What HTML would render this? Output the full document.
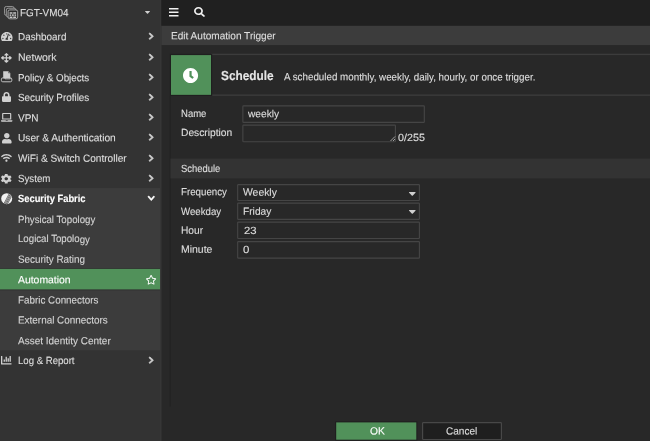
<!DOCTYPE html>
<html lang="en"><head><meta charset="utf-8"><title>Edit Automation Trigger</title>
<style>
html,body{margin:0;padding:0}
body{width:650px;height:441px;overflow:hidden;position:relative;background:#282828;font-family:"Liberation Sans",sans-serif}
.a{position:absolute;display:block}
.t{position:absolute;white-space:nowrap;display:block;transform-origin:0 0;text-rendering:geometricPrecision;-webkit-text-stroke:0.12px}
svg{position:absolute;overflow:visible}
.bx{position:absolute;box-sizing:border-box;border:1px solid #484848;background:#282828}
#txt{position:absolute;left:0;top:0;width:650px;height:441px;will-change:transform}

</style></head><body>
<svg style="left:0;top:0" width="650" height="441" viewBox="0 0 650 441"><rect x="0.00" y="0.00" width="160.20" height="441.00" fill="#333333"/>
<rect x="0.00" y="188.10" width="160.20" height="162.20" fill="#3c3c3c"/>
<rect x="0.00" y="268.00" width="160.20" height="22.30" fill="#303030"/>
<rect x="0.00" y="268.90" width="160.20" height="20.50" fill="#51915a"/>
<rect x="160.20" y="0.00" width="1.20" height="441.00" fill="#3a3a3a"/>
<rect x="161.40" y="0.00" width="488.60" height="25.80" fill="#202020"/>
<rect x="161.40" y="25.80" width="488.60" height="19.30" fill="#3c3c3c"/>
<rect x="211.00" y="53.70" width="439.00" height="1.40" fill="#3c3c3c"/>
<rect x="211.00" y="94.40" width="439.00" height="1.50" fill="#3a3a3a"/>
<rect x="169.80" y="53.80" width="42.40" height="42.20" fill="#1f1f1f"/>
<rect x="171.00" y="55.10" width="40.00" height="39.75" fill="#51915a"/>
<rect x="169.60" y="96.00" width="1.10" height="310.50" fill="#212121"/>
<rect x="170.40" y="158.60" width="479.60" height="19.80" fill="#333333"/>
<rect x="242.88" y="105.88" width="181.45" height="16.45" rx="0.7" fill="none" stroke="#454545" stroke-width="1.15"/>
<rect x="242.88" y="125.08" width="152.55" height="16.65" rx="0.7" fill="none" stroke="#454545" stroke-width="1.15"/>
<rect x="237.67" y="184.57" width="181.75" height="15.95" rx="0.7" fill="none" stroke="#454545" stroke-width="1.15"/>
<rect x="237.67" y="203.07" width="181.75" height="16.35" rx="0.7" fill="none" stroke="#454545" stroke-width="1.15"/>
<rect x="237.67" y="222.17" width="181.75" height="16.35" rx="0.7" fill="none" stroke="#454545" stroke-width="1.15"/>
<rect x="237.67" y="241.57" width="181.75" height="16.55" rx="0.7" fill="none" stroke="#454545" stroke-width="1.15"/>
<rect x="335.20" y="421.40" width="82.10" height="19.30" fill="#1f1f1f"/>
<rect x="336.20" y="422.40" width="80.10" height="17.30" fill="#51915a"/>
<rect x="422.60" y="422.70" width="78.80" height="16.80" rx="0.8" fill="#1f1f1f" stroke="#484848" stroke-width="1.2"/></svg>
<!-- icons -->
<svg style="left:4px;top:5.700px" width="14.2" height="13.3" viewBox="0 0 14.2 13.8" preserveAspectRatio="none">
<rect x="0.5" y="0.5" width="9.6" height="9.2" rx="1.8" fill="#333" stroke="#9c9c9c" stroke-width="0.9"/>
<rect x="2.3" y="2.3" width="9.6" height="9.2" rx="1.8" fill="#333" stroke="#a6a6a6" stroke-width="0.9"/>
<rect x="4.1" y="4.1" width="9.6" height="9.2" rx="1.8" fill="#2a2a2a" stroke="#b4b4b4" stroke-width="0.9"/>
<g fill="#e4e4e4"><rect x="5.6" y="6.6" width="2.9" height="1.3"/><rect x="9.2" y="6.6" width="2.9" height="1.3"/>
<rect x="5.6" y="8.8" width="1.6" height="1.3"/><rect x="7.9" y="8.8" width="1.9" height="1.3"/><rect x="10.5" y="8.8" width="1.6" height="1.3"/>
<rect x="5.6" y="11" width="2.9" height="1.3"/><rect x="9.2" y="11" width="2.9" height="1.3"/></g>
</svg>
<svg style="left:145.00px;top:11.20px" width="5.00" height="2.80" viewBox="11.30 192.00 297.31 168.65" preserveAspectRatio="none"><path fill="#d0d0d0" stroke="#d0d0d0" stroke-width="0" d="M31.3 192h257.300c17.800 0 26.700 21.500 14.100 34.100L174.100 354.800c-7.800 7.800-20.500 7.800-28.300 0L17.200 226.100C4.600 213.500 13.500 192 31.300 192z"/></svg>
<svg style="left:0.90px;top:31.50px" width="11.60" height="9.10" viewBox="0.00 32.00 576.00 448.00" preserveAspectRatio="none"><path fill="#d0d0d0" stroke="#d0d0d0" stroke-width="0" d="M288 32C128.94 32 0 160.94 0 320c0 52.8 14.25 102.26 39.06 144.8 5.61 9.62 16.3 15.2 27.44 15.2h443c11.14 0 21.83-5.58 27.44-15.2C561.75 422.26 576 372.8 576 320c0-159.06-128.94-288-288-288zm0 64c14.71 0 26.58 10.13 30.32 23.65-1.11 2.26-2.64 4.23-3.45 6.67l-9.22 27.67c-5.13 3.49-10.97 6.01-17.64 6.01-17.67 0-32-14.33-32-32S270.33 96 288 96zM96 384c-17.67 0-32-14.33-32-32s14.33-32 32-32 32 14.33 32 32-14.33 32-32 32zm48-160c-17.67 0-32-14.33-32-32s14.33-32 32-32 32 14.33 32 32-14.33 32-32 32zm246.77-72.41l-61.33 184C343.13 347.33 352 364.54 352 384c0 11.72-3.38 22.55-8.88 32H232.88c-5.5-9.45-8.88-20.28-8.88-32 0-33.94 26.5-61.43 59.9-63.59l61.34-184.01c4.17-12.56 17.73-19.45 30.36-15.17 12.57 4.19 19.35 17.79 15.17 30.36zm14.66 57.2l15.52-46.55c3.47-1.29 7.13-2.23 11.05-2.23 17.67 0 32 14.33 32 32s-14.33 32-32 32c-11.38-.01-20.89-6.28-26.57-15.22zM480 384c-17.67 0-32-14.33-32-32s14.33-32 32-32 32 14.33 32 32-14.33 32-32 32z"/></svg>
<svg style="left:1.00px;top:52.50px" width="10.80" height="9.80" viewBox="-0.00 -0.00 512.00 512.00" preserveAspectRatio="none"><path fill="#d0d0d0" stroke="#d0d0d0" stroke-width="0" d="M352.201 425.775l-79.196 79.196c-9.373 9.373-24.568 9.373-33.941 0l-79.196-79.196c-15.119-15.119-4.411-40.971 16.971-40.970h51.162L228 284H127.196v51.162c0 21.382-25.851 32.090-40.971 16.971L7.029 272.937c-9.373-9.373-9.373-24.569 0-33.941L86.225 159.800c15.119-15.119 40.971-4.411 40.971 16.971V228H228V127.196h-51.230c-21.382 0-32.090-25.851-16.971-40.971l79.196-79.196c9.373-9.373 24.568-9.373 33.941 0l79.196 79.196c15.119 15.119 4.411 40.971-16.971 40.971h-51.162V228h100.804v-51.162c0-21.382 25.851-32.090 40.970-16.971l79.196 79.196c9.373 9.373 9.373 24.569 0 33.941L425.773 352.200c-15.119 15.119-40.971 4.411-40.970-16.971V284H284v100.804h51.230c21.382 0 32.090 25.851 16.971 40.971z"/></svg>
<svg style="left:1px;top:71px" width="11.2" height="11" viewBox="0 0 11.2 11">
<path d="M2.2 0.2h5.2l1.9 1.9v5.2h-7.100z" fill="#d0d0d0"/>
<path d="M7.300 0.2v2h2z" fill="#555"/>
<path d="M1.700 6.900h2.300v0.900h5.200v-0.900h0.300a1.300 1.300 0 0 1 1.300 1.300v1.300a1.300 1.300 0 0 1 -1.300 1.300h-7.800a1.300 1.300 0 0 1 -1.300 -1.300v-1.300a1.300 1.300 0 0 1 1.300 -1.300z" fill="none" stroke="#d0d0d0" stroke-width="0.9"/>
</svg>
<svg style="left:2.00px;top:92.00px" width="9.00" height="9.90" viewBox="0.00 0.00 448.00 512.00" preserveAspectRatio="none"><path fill="#d0d0d0" stroke="#d0d0d0" stroke-width="0" d="M400 224h-24v-72C376 68.2 307.8 0 224 0S72 68.2 72 152v72H48c-26.5 0-48 21.5-48 48v192c0 26.5 21.5 48 48 48h352c26.5 0 48-21.5 48-48V272c0-26.5-21.5-48-48-48zm-104 0H152v-72c0-39.7 32.3-72 72-72s72 32.3 72 72v72z"/></svg>
<svg style="left:0.90px;top:112.80px" width="11.40" height="8.80" viewBox="0.00 0.00 640.00 512.00" preserveAspectRatio="none"><path fill="#d0d0d0" stroke="#d0d0d0" stroke-width="0" d="M624 416H381.540c-.740 19.810-14.710 32-32.740 32H288c-18.690 0-33.020-17.470-32.770-32H16c-8.800 0-16 7.200-16 16v16c0 35.200 28.800 64 64 64h512c35.200 0 64-28.800 64-64v-16c0-8.800-7.200-16-16-16zM576 48c0-26.400-21.600-48-48-48H112C85.600 0 64 21.600 64 48v336h512V48zm-64 272H128V64h384v256z"/></svg>
<svg style="left:1.60px;top:132.50px" width="9.60" height="10.50" viewBox="0.00 0.00 448.00 512.00" preserveAspectRatio="none"><path fill="#d0d0d0" stroke="#d0d0d0" stroke-width="0" d="M224 256c70.7 0 128-57.3 128-128S294.7 0 224 0 96 57.3 96 128s57.3 128 128 128zm89.6 32h-16.7c-22.2 10.2-46.9 16-72.9 16s-50.6-5.8-72.9-16h-16.7C60.2 288 0 348.2 0 422.4V464c0 26.5 21.5 48 48 48h352c26.5 0 48-21.5 48-48v-41.6c0-74.2-60.2-134.400-134.400-134.400z"/></svg>
<svg style="left:1.10px;top:153.90px" width="10.90" height="7.80" viewBox="0.00 32.00 640.00 448.00" preserveAspectRatio="none"><path fill="#d0d0d0" stroke="#d0d0d0" stroke-width="0" d="M634.91 154.88C457.74-8.99 182.19-8.93 5.09 154.88c-6.66 6.16-6.79 16.59-.35 22.98l34.240 33.970c6.140 6.100 16.020 6.230 22.400.380 145.920-133.680 371.300-133.710 517.250 0 6.380 5.850 16.260 5.710 22.400-.380l34.240-33.970c6.430-6.390 6.300-16.820-.360-22.980zM320 352c-35.350 0-64 28.650-64 64s28.650 64 64 64 64-28.650 64-64-28.650-64-64-64zm202.670-83.590c-115.260-101.930-290.210-101.820-405.340 0-6.900 6.100-7.120 16.690-.570 23.150l34.440 33.990c6 5.920 15.660 6.320 22.050.800 83.950-72.570 209.740-72.410 293.490 0 6.390 5.520 16.050 5.130 22.050-.800l34.440-33.990c6.560-6.460 6.330-17.060-.560-23.150z"/></svg>
<svg style="left:1.10px;top:173.60px" width="10.50" height="9.50" viewBox="18.64 8.10 474.82 496.00" preserveAspectRatio="none"><path fill="#d0d0d0" stroke="#d0d0d0" stroke-width="0" d="M487.4 315.7l-42.6-24.6c4.3-23.2 4.3-47 0-70.200l42.600-24.600c4.900-2.800 7.100-8.600 5.500-14-11.100-35.600-30-67.800-54.700-94.600-3.800-4.100-10-5.100-14.800-2.300L380.800 110c-17.900-15.400-38.500-27.300-60.800-35.100V25.800c0-5.600-3.900-10.500-9.400-11.700-36.700-8.200-74.300-7.800-109.200 0-5.500 1.200-9.400 6.100-9.400 11.700V75c-22.200 7.900-42.800 19.800-60.800 35.100L88.700 85.500c-4.900-2.800-11-1.900-14.800 2.300-24.700 26.700-43.600 58.900-54.700 94.600-1.700 5.400.6 11.200 5.500 14L67.300 221c-4.300 23.200-4.300 47 0 70.200l-42.600 24.600c-4.900 2.800-7.100 8.600-5.500 14 11.100 35.600 30 67.800 54.700 94.600 3.800 4.100 10 5.100 14.800 2.300l42.600-24.600c17.900 15.400 38.500 27.300 60.800 35.100v49.200c0 5.600 3.900 10.500 9.400 11.700 36.700 8.200 74.300 7.800 109.200 0 5.500-1.200 9.400-6.100 9.400-11.700v-49.200c22.200-7.900 42.800-19.800 60.800-35.100l42.600 24.600c4.900 2.800 11 1.900 14.800-2.300 24.700-26.700 43.600-58.900 54.700-94.600 1.500-5.500-.7-11.300-5.600-14.100zM256 336c-44.100 0-80-35.900-80-80s35.900-80 80-80 80 35.900 80 80-35.900 80-80 80z"/></svg>
<svg style="left:1px;top:192.800px" width="11.4" height="11.4" viewBox="0 0 11.4 11.4">
<defs><clipPath id="fc"><circle cx="5.7" cy="5.7" r="5.500"/></clipPath></defs>
<circle cx="5.7" cy="5.7" r="5.500" fill="#f2f2f2"/>
<g clip-path="url(#fc)" stroke="#383838" stroke-width="0.7">
<path d="M2.600 11.400L8.200 0.800M3.800 11.400L9.100 1.400M5 11.400L9.800 2.300M6.200 11.400L10.400 3.400"/></g>
</svg>
<svg style="left:1.00px;top:356.40px" width="10.50" height="8.60" viewBox="0.00 64.00 512.00 384.00" preserveAspectRatio="none"><path fill="#d0d0d0" stroke="#d0d0d0" stroke-width="0" d="M332.8 320h38.400c6.400 0 12.800-6.400 12.800-12.800V172.800c0-6.400-6.400-12.800-12.800-12.800h-38.400c-6.400 0-12.800 6.400-12.800 12.800v134.400c0 6.400 6.400 12.800 12.800 12.800zm96 0h38.400c6.400 0 12.800-6.400 12.800-12.800V76.800c0-6.400-6.400-12.800-12.800-12.800h-38.400c-6.400 0-12.800 6.400-12.800 12.800v230.400c0 6.400 6.400 12.800 12.800 12.800zm-288 0h38.400c6.400 0 12.800-6.400 12.800-12.800v-70.400c0-6.400-6.400-12.800-12.800-12.800h-38.400c-6.400 0-12.800 6.400-12.800 12.800v70.400c0 6.400 6.400 12.800 12.800 12.800zm96 0h38.400c6.400 0 12.800-6.400 12.800-12.800V108.800c0-6.400-6.400-12.800-12.800-12.800h-38.400c-6.400 0-12.800 6.400-12.800 12.800v198.400c0 6.400 6.400 12.800 12.800 12.800zM496 384H64V80c0-8.840-7.160-16-16-16H16C7.160 64 0 71.160 0 80v336c0 17.670 14.330 32 32 32h464c8.840 0 16-7.160 16-16v-32c0-8.840-7.160-16-16-16z"/></svg>
<svg style="left:148.80px;top:33.30px" width="4.40" height="6.40" viewBox="27.49 37.66 265.01 436.69" preserveAspectRatio="none"><path fill="#d0d0d0" stroke="#d0d0d0" stroke-width="45" d="M285.476 272.971L91.132 467.314c-9.373 9.373-24.569 9.373-33.941 0l-22.667-22.667c-9.357-9.357-9.375-24.522-.04-33.901L188.505 256 34.484 101.255c-9.335-9.379-9.317-24.544.04-33.901l22.667-22.667c9.373-9.373 24.569-9.373 33.941 0L285.475 239.03c9.373 9.372 9.373 24.568.001 33.941z"/></svg>
<svg style="left:148.80px;top:53.52px" width="4.40" height="6.40" viewBox="27.49 37.66 265.01 436.69" preserveAspectRatio="none"><path fill="#d0d0d0" stroke="#d0d0d0" stroke-width="45" d="M285.476 272.971L91.132 467.314c-9.373 9.373-24.569 9.373-33.941 0l-22.667-22.667c-9.357-9.357-9.375-24.522-.04-33.901L188.505 256 34.484 101.255c-9.335-9.379-9.317-24.544.04-33.901l22.667-22.667c9.373-9.373 24.569-9.373 33.941 0L285.475 239.03c9.373 9.372 9.373 24.568.001 33.941z"/></svg>
<svg style="left:148.80px;top:73.74px" width="4.40" height="6.40" viewBox="27.49 37.66 265.01 436.69" preserveAspectRatio="none"><path fill="#d0d0d0" stroke="#d0d0d0" stroke-width="45" d="M285.476 272.971L91.132 467.314c-9.373 9.373-24.569 9.373-33.941 0l-22.667-22.667c-9.357-9.357-9.375-24.522-.04-33.901L188.505 256 34.484 101.255c-9.335-9.379-9.317-24.544.04-33.901l22.667-22.667c9.373-9.373 24.569-9.373 33.941 0L285.475 239.03c9.373 9.372 9.373 24.568.001 33.941z"/></svg>
<svg style="left:148.80px;top:93.96px" width="4.40" height="6.40" viewBox="27.49 37.66 265.01 436.69" preserveAspectRatio="none"><path fill="#d0d0d0" stroke="#d0d0d0" stroke-width="45" d="M285.476 272.971L91.132 467.314c-9.373 9.373-24.569 9.373-33.941 0l-22.667-22.667c-9.357-9.357-9.375-24.522-.04-33.901L188.505 256 34.484 101.255c-9.335-9.379-9.317-24.544.04-33.901l22.667-22.667c9.373-9.373 24.569-9.373 33.941 0L285.475 239.03c9.373 9.372 9.373 24.568.001 33.941z"/></svg>
<svg style="left:148.80px;top:114.18px" width="4.40" height="6.40" viewBox="27.49 37.66 265.01 436.69" preserveAspectRatio="none"><path fill="#d0d0d0" stroke="#d0d0d0" stroke-width="45" d="M285.476 272.971L91.132 467.314c-9.373 9.373-24.569 9.373-33.941 0l-22.667-22.667c-9.357-9.357-9.375-24.522-.04-33.901L188.505 256 34.484 101.255c-9.335-9.379-9.317-24.544.04-33.901l22.667-22.667c9.373-9.373 24.569-9.373 33.941 0L285.475 239.03c9.373 9.372 9.373 24.568.001 33.941z"/></svg>
<svg style="left:148.80px;top:134.40px" width="4.40" height="6.40" viewBox="27.49 37.66 265.01 436.69" preserveAspectRatio="none"><path fill="#d0d0d0" stroke="#d0d0d0" stroke-width="45" d="M285.476 272.971L91.132 467.314c-9.373 9.373-24.569 9.373-33.941 0l-22.667-22.667c-9.357-9.357-9.375-24.522-.04-33.901L188.505 256 34.484 101.255c-9.335-9.379-9.317-24.544.04-33.901l22.667-22.667c9.373-9.373 24.569-9.373 33.941 0L285.475 239.03c9.373 9.372 9.373 24.568.001 33.941z"/></svg>
<svg style="left:148.80px;top:154.62px" width="4.40" height="6.40" viewBox="27.49 37.66 265.01 436.69" preserveAspectRatio="none"><path fill="#d0d0d0" stroke="#d0d0d0" stroke-width="45" d="M285.476 272.971L91.132 467.314c-9.373 9.373-24.569 9.373-33.941 0l-22.667-22.667c-9.357-9.357-9.375-24.522-.04-33.901L188.505 256 34.484 101.255c-9.335-9.379-9.317-24.544.04-33.901l22.667-22.667c9.373-9.373 24.569-9.373 33.941 0L285.475 239.03c9.373 9.372 9.373 24.568.001 33.941z"/></svg>
<svg style="left:148.80px;top:174.84px" width="4.40" height="6.40" viewBox="27.49 37.66 265.01 436.69" preserveAspectRatio="none"><path fill="#d0d0d0" stroke="#d0d0d0" stroke-width="45" d="M285.476 272.971L91.132 467.314c-9.373 9.373-24.569 9.373-33.941 0l-22.667-22.667c-9.357-9.357-9.375-24.522-.04-33.901L188.505 256 34.484 101.255c-9.335-9.379-9.317-24.544.04-33.901l22.667-22.667c9.373-9.373 24.569-9.373 33.941 0L285.475 239.03c9.373 9.372 9.373 24.568.001 33.941z"/></svg>
<svg style="left:148.80px;top:356.82px" width="4.40" height="6.40" viewBox="27.49 37.66 265.01 436.69" preserveAspectRatio="none"><path fill="#d0d0d0" stroke="#d0d0d0" stroke-width="45" d="M285.476 272.971L91.132 467.314c-9.373 9.373-24.569 9.373-33.941 0l-22.667-22.667c-9.357-9.357-9.375-24.522-.04-33.901L188.505 256 34.484 101.255c-9.335-9.379-9.317-24.544.04-33.901l22.667-22.667c9.373-9.373 24.569-9.373 33.941 0L285.475 239.03c9.373 9.372 9.373 24.568.001 33.941z"/></svg>
<svg style="left:148.00px;top:196.20px" width="6.50" height="4.50" viewBox="5.66 123.49 436.69 265.01" preserveAspectRatio="none"><path fill="#ffffff" stroke="#ffffff" stroke-width="40" d="M207.029 381.476L12.686 187.132c-9.373-9.373-9.373-24.569 0-33.941l22.667-22.667c9.357-9.357 24.522-9.375 33.901-.04L224 284.505l154.745-154.021c9.379-9.335 24.544-9.317 33.901.04l22.667 22.667c9.373 9.373 9.373 24.569 0 33.941L240.971 381.476c-9.373 9.372-24.569 9.372-33.942 0z"/></svg>
<svg style="left:146.00px;top:275.00px" width="10.20" height="9.60" viewBox="20.50 -0.01 535.00 512.06" preserveAspectRatio="none"><path fill="#ffffff" stroke="#ffffff" stroke-width="0" d="M528.1 171.500L382 150.200 316.700 17.800c-11.700-23.600-45.600-23.900-57.400 0L194 150.200 47.900 171.500c-26.200 3.800-36.700 36.100-17.700 54.600l105.700 103-25 145.500c-4.500 26.300 23.200 46 46.400 33.700L288 439.600l130.700 68.700c23.200 12.200 50.900-7.400 46.400-33.700l-25-145.500 105.700-103c19-18.500 8.500-50.800-17.700-54.600zM388.600 312.300l23.700 138.400L288 385.400l-124.300 65.300 23.700-138.400-100.600-98 139-20.200 62.200-126 62.200 126 139 20.200-100.600 98z"/></svg>
<svg style="left:168.80px;top:8.00px" width="9.50" height="8.50" viewBox="0.00 60.00 448.00 392.00" preserveAspectRatio="none"><path fill="#f0f0f0" stroke="#f0f0f0" stroke-width="0" d="M16 132h416c8.837 0 16-7.163 16-16V76c0-8.837-7.163-16-16-16H16C7.163 60 0 67.163 0 76v40c0 8.837 7.163 16 16 16zm0 160h416c8.837 0 16-7.163 16-16v-40c0-8.837-7.163-16-16-16H16c-8.837 0-16 7.163-16 16v40c0 8.837 7.163 16 16 16zm0 160h416c8.837 0 16-7.163 16-16v-40c0-8.837-7.163-16-16-16H16c-8.837 0-16 7.163-16 16v40c0 8.837 7.163 16 16 16z"/></svg>
<svg style="left:194.00px;top:7.00px" width="11.00" height="10.00" viewBox="0.00 0.00 511.96 512.05" preserveAspectRatio="none"><path fill="#f0f0f0" stroke="#f0f0f0" stroke-width="0" d="M505 442.700L405.300 343c-4.500-4.500-10.600-7-17-7H372c27.600-35.300 44-79.700 44-128C416 93.100 322.900 0 208 0S0 93.100 0 208s93.100 208 208 208c48.300 0 92.700-16.400 128-44v16.300c0 6.400 2.500 12.500 7 17l99.700 99.700c9.400 9.400 24.600 9.400 33.900 0l28.300-28.300c9.400-9.400 9.400-24.600.1-34zM208 336c-70.700 0-128-57.200-128-128 0-70.700 57.200-128 128-128 70.700 0 128 57.200 128 128 0 70.700-57.200 128-128 128z"/></svg>
<svg style="left:182.80px;top:67.60px" width="15.10" height="15.10" viewBox="8.00 8.00 496.00 496.00" preserveAspectRatio="none"><path fill="#ffffff" stroke="#ffffff" stroke-width="0" d="M256 8C119 8 8 119 8 256s111 248 248 248 248-111 248-248S393 8 256 8zm57.100 350.100L224.900 294c-3.100-2.300-4.900-5.900-4.900-9.700V116c0-6.600 5.400-12 12-12h48c6.600 0 12 5.400 12 12v137.700l63.500 46.200c5.400 3.900 6.500 11.400 2.600 16.800l-28.200 38.800c-3.900 5.300-11.400 6.500-16.800 2.600z"/></svg>
<svg style="left:409.00px;top:191.50px" width="6.60" height="3.80" viewBox="11.30 192.00 297.31 168.65" preserveAspectRatio="none"><path fill="#d0d0d0" stroke="#d0d0d0" stroke-width="0" d="M31.3 192h257.300c17.800 0 26.700 21.500 14.100 34.100L174.100 354.800c-7.800 7.800-20.500 7.800-28.300 0L17.200 226.100C4.600 213.500 13.500 192 31.300 192z"/></svg>
<svg style="left:409.00px;top:210.30px" width="6.60" height="3.80" viewBox="11.30 192.00 297.31 168.65" preserveAspectRatio="none"><path fill="#d0d0d0" stroke="#d0d0d0" stroke-width="0" d="M31.3 192h257.300c17.800 0 26.700 21.500 14.100 34.100L174.100 354.800c-7.800 7.800-20.500 7.800-28.300 0L17.200 226.100C4.600 213.500 13.500 192 31.300 192z"/></svg>
<svg style="left:389.500px;top:135.800px" width="5.5" height="5.5" viewBox="0 0 5.5 5.5"><path d="M5 0.500L0.500 5M5 3L3 5" stroke="#c0c0c0" stroke-width="0.8" fill="none"/></svg>
<div id="txt">
<span class="t" id="t_fgt" style="left:20.31px;top:9px;font-size:10.4px;line-height:10.4px;font-weight:400;color:#dedede;transform:translateY(0.34px) rotate(0.03deg) scaleX(0.9530)">FGT-VM04</span>
<span class="t" id="t_dash" style="left:17.50px;top:33px;font-size:10.4px;line-height:10.4px;font-weight:400;color:#dedede;transform:translateY(0.33px) rotate(0.03deg) scaleX(0.9522)">Dashboard</span>
<span class="t" id="t_net" style="left:17.50px;top:53px;font-size:10.4px;line-height:10.4px;font-weight:400;color:#dedede;transform:translateY(0.72px) rotate(0.03deg) scaleX(1.0130)">Network</span>
<span class="t" id="t_pol" style="left:17.50px;top:74px;font-size:10.4px;line-height:10.4px;font-weight:400;color:#dedede;transform:translateY(0.13px) rotate(0.03deg) scaleX(0.9417)">Policy &amp; Objects</span>
<span class="t" id="t_sec" style="left:17.50px;top:93px;font-size:10.4px;line-height:10.4px;font-weight:400;color:#dedede;transform:translateY(0.92px) rotate(0.03deg) scaleX(0.9492)">Security Profiles</span>
<span class="t" id="t_vpn" style="left:17.50px;top:114px;font-size:10.4px;line-height:10.4px;font-weight:400;color:#dedede;transform:translateY(0.42px) rotate(0.03deg) scaleX(0.9636)">VPN</span>
<span class="t" id="t_user" style="left:17.50px;top:134px;font-size:10.4px;line-height:10.4px;font-weight:400;color:#dedede;transform:translateY(0.21px) rotate(0.03deg) scaleX(0.9783)">User &amp; Authentication</span>
<span class="t" id="t_wifi" style="left:17.50px;top:154px;font-size:10.4px;line-height:10.4px;font-weight:400;color:#dedede;transform:translateY(0.78px) rotate(0.03deg) scaleX(0.9702)">WiFi &amp; Switch Controller</span>
<span class="t" id="t_sys" style="left:17.50px;top:175px;font-size:10.4px;line-height:10.4px;font-weight:400;color:#dedede;transform:translateY(0.00px) rotate(0.03deg) scaleX(0.9350)">System</span>
<span class="t" id="t_fab" style="left:17.50px;top:195px;font-size:10.4px;line-height:10.4px;font-weight:700;color:#ffffff;transform:translateY(0.04px) rotate(0.03deg) scaleX(0.9000)">Security Fabric</span>
<span class="t" id="t_phy" style="left:17.50px;top:215px;font-size:10.4px;line-height:10.4px;font-weight:400;color:#d4d4d4;transform:translateY(0.85px) rotate(0.03deg) scaleX(0.9310)">Physical Topology</span>
<span class="t" id="t_log" style="left:17.50px;top:235px;font-size:10.4px;line-height:10.4px;font-weight:400;color:#d4d4d4;transform:translateY(0.47px) rotate(0.03deg) scaleX(0.9307)">Logical Topology</span>
<span class="t" id="t_rat" style="left:17.50px;top:255px;font-size:10.4px;line-height:10.4px;font-weight:400;color:#d4d4d4;transform:translateY(0.80px) rotate(0.03deg) scaleX(0.9508)">Security Rating</span>
<span class="t" id="t_auto" style="left:17.50px;top:276px;font-size:10.4px;line-height:10.4px;font-weight:400;color:#ffffff;transform:translateY(0.26px) rotate(0.03deg) scaleX(1.0011)">Automation</span>
<span class="t" id="t_fcon" style="left:17.50px;top:296px;font-size:10.4px;line-height:10.4px;font-weight:400;color:#d4d4d4;transform:translateY(0.56px) rotate(0.03deg) scaleX(0.9466)">Fabric Connectors</span>
<span class="t" id="t_econ" style="left:17.50px;top:316px;font-size:10.4px;line-height:10.4px;font-weight:400;color:#d4d4d4;transform:translateY(0.44px) rotate(0.03deg) scaleX(0.9540)">External Connectors</span>
<span class="t" id="t_asset" style="left:17.50px;top:337px;font-size:10.4px;line-height:10.4px;font-weight:400;color:#d4d4d4;transform:translateY(0.33px) rotate(0.03deg) scaleX(0.9617)">Asset Identity Center</span>
<span class="t" id="t_lr" style="left:17.50px;top:357px;font-size:10.4px;line-height:10.4px;font-weight:400;color:#dedede;transform:translateY(0.40px) rotate(0.03deg) scaleX(0.9229)">Log &amp; Report</span>
<span class="t" id="t_title" style="left:170.60px;top:32px;font-size:10.4px;line-height:10.4px;font-weight:400;color:#dedede;transform:translateY(0.16px) rotate(0.03deg) scaleX(0.9688)">Edit Automation Trigger</span>
<span class="t" id="t_sched" style="left:220.78px;top:68px;font-size:13px;line-height:13px;font-weight:700;color:#e6e6e6;transform:translateY(0.99px) rotate(0.03deg) scaleX(0.9112)">Schedule</span>
<span class="t" id="t_desc" style="left:283.71px;top:73px;font-size:10.4px;line-height:10.4px;font-weight:400;color:#dedede;transform:translateY(0.34px) rotate(0.03deg) scaleX(0.9427)">A scheduled monthly, weekly, daily, hourly, or once trigger.</span>
<span class="t" id="t_name" style="left:180.50px;top:110px;font-size:10.4px;line-height:10.4px;font-weight:400;color:#dedede;transform:translateY(0.30px) rotate(0.03deg) scaleX(0.9168)">Name</span>
<span class="t" id="t_weekly" style="left:248.10px;top:110px;font-size:10.4px;line-height:10.4px;font-weight:400;color:#dedede;transform:translateY(0.34px) rotate(0.03deg) scaleX(0.9812)">weekly</span>
<span class="t" id="t_description" style="left:180.50px;top:129px;font-size:10.4px;line-height:10.4px;font-weight:400;color:#dedede;transform:translateY(0.09px) rotate(0.03deg) scaleX(0.9844)">Description</span>
<span class="t" id="t_cnt" style="left:398.49px;top:134px;font-size:10.4px;line-height:10.4px;font-weight:400;color:#dedede;transform:translateY(0.10px) rotate(0.03deg) scaleX(1.0325)">0/255</span>
<span class="t" id="t_sched2" style="left:180.60px;top:164px;font-size:10.4px;line-height:10.4px;font-weight:400;color:#dedede;transform:translateY(0.84px) rotate(0.03deg) scaleX(0.9080)">Schedule</span>
<span class="t" id="t_freq" style="left:180.50px;top:188px;font-size:10.4px;line-height:10.4px;font-weight:400;color:#dedede;transform:translateY(0.15px) rotate(0.03deg) scaleX(0.9354)">Frequency</span>
<span class="t" id="t_weeklyv" style="left:242.50px;top:188px;font-size:10.4px;line-height:10.4px;font-weight:400;color:#dedede;transform:translateY(0.62px) rotate(0.03deg) scaleX(1.0000)">Weekly</span>
<span class="t" id="t_wd" style="left:180.60px;top:207px;font-size:10.4px;line-height:10.4px;font-weight:400;color:#dedede;transform:translateY(0.65px) rotate(0.03deg) scaleX(0.9297)">Weekday</span>
<span class="t" id="t_fri" style="left:242.50px;top:207px;font-size:10.4px;line-height:10.4px;font-weight:400;color:#dedede;transform:translateY(0.84px) rotate(0.03deg) scaleX(0.9813)">Friday</span>
<span class="t" id="t_hour" style="left:180.50px;top:226px;font-size:10.4px;line-height:10.4px;font-weight:400;color:#dedede;transform:translateY(0.72px) rotate(0.03deg) scaleX(0.9809)">Hour</span>
<span class="t" id="t_23" style="left:243.53px;top:227px;font-size:10.4px;line-height:10.4px;font-weight:400;color:#dedede;transform:translateY(0.05px) rotate(0.03deg) scaleX(1.0899)">23</span>
<span class="t" id="t_min" style="left:180.50px;top:245px;font-size:10.4px;line-height:10.4px;font-weight:400;color:#dedede;transform:translateY(0.79px) rotate(0.03deg) scaleX(1.0066)">Minute</span>
<span class="t" id="t_0" style="left:242.92px;top:245px;font-size:10.4px;line-height:10.4px;font-weight:400;color:#dedede;transform:translateY(0.91px) rotate(0.03deg) scaleX(1.1000)">0</span>
<span class="t" id="t_ok" style="left:370.30px;top:427px;font-size:10.4px;line-height:10.4px;font-weight:400;color:#ffffff;transform:translateY(0.51px) rotate(0.03deg) scaleX(0.9871)">OK</span>
<span class="t" id="t_cancel" style="left:446.18px;top:427px;font-size:10.4px;line-height:10.4px;font-weight:400;color:#dedede;transform:translateY(0.52px) rotate(0.03deg) scaleX(0.9675)">Cancel</span>
</div>
</body></html>
